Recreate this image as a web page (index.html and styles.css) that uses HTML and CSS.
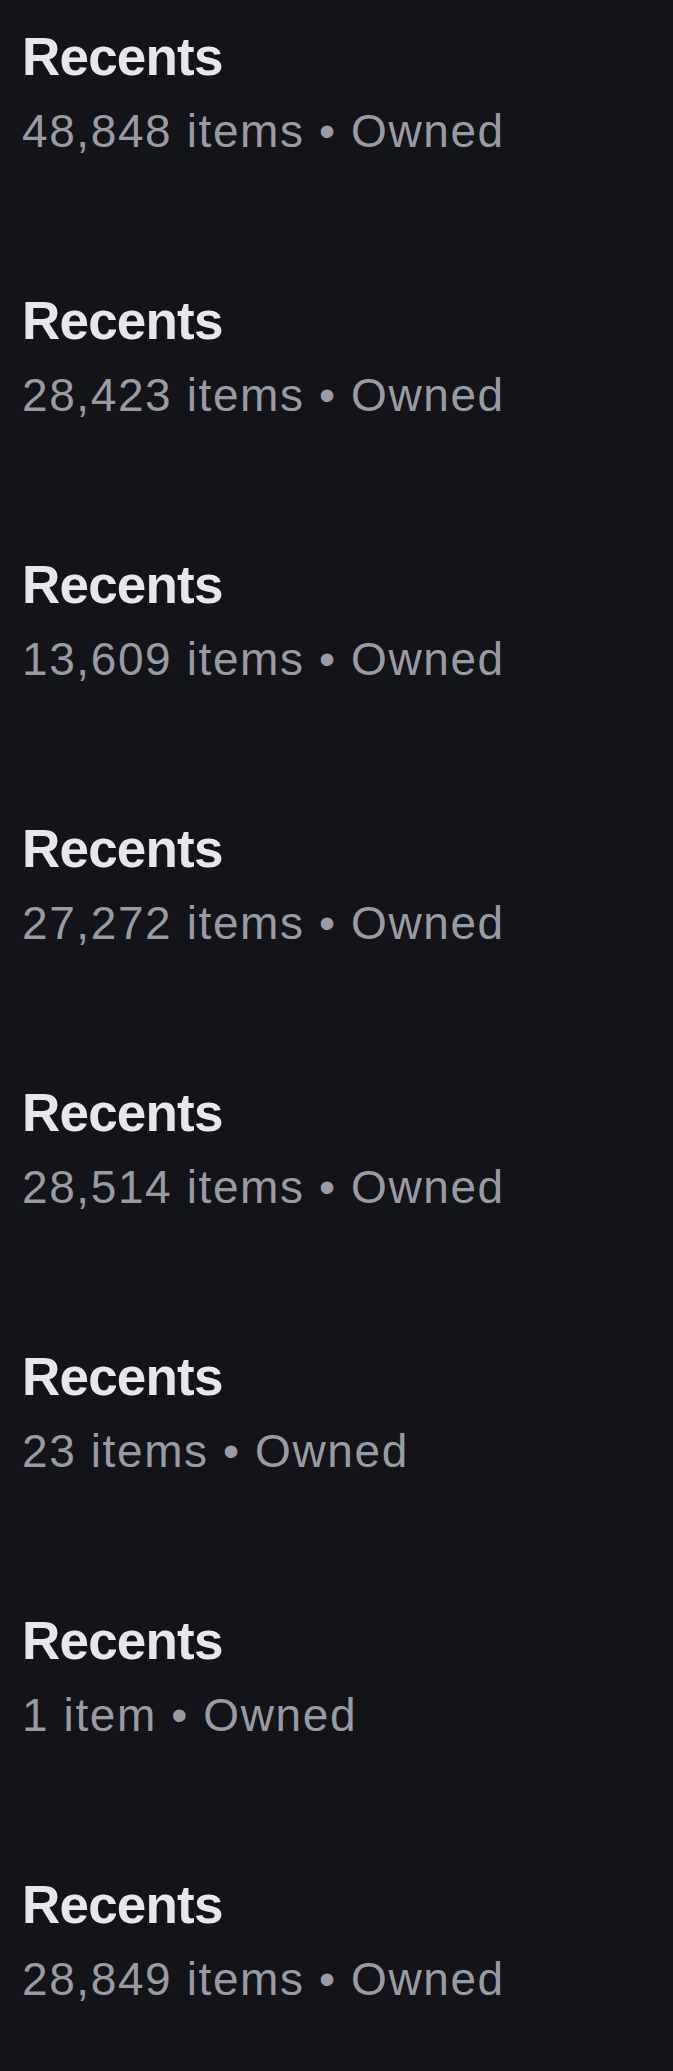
FILE: index.html
```html
<!DOCTYPE html>
<html lang="en">
<head>
<meta charset="utf-8">
<title>Recents</title>
<link rel="stylesheet" href="styles.css">
</head>
<body>
<main class="list">
  <section class="item"><h2 class="item-title">Recents</h2><p class="item-meta">48,848 items • Owned</p></section>
  <section class="item"><h2 class="item-title">Recents</h2><p class="item-meta">28,423 items • Owned</p></section>
  <section class="item"><h2 class="item-title">Recents</h2><p class="item-meta">13,609 items • Owned</p></section>
  <section class="item"><h2 class="item-title">Recents</h2><p class="item-meta">27,272 items • Owned</p></section>
  <section class="item"><h2 class="item-title">Recents</h2><p class="item-meta">28,514 items • Owned</p></section>
  <section class="item"><h2 class="item-title">Recents</h2><p class="item-meta">23 items • Owned</p></section>
  <section class="item"><h2 class="item-title">Recents</h2><p class="item-meta">1 item • Owned</p></section>
  <section class="item"><h2 class="item-title">Recents</h2><p class="item-meta">28,849 items • Owned</p></section>
</main>
</body>
</html>
```
FILE: styles.css
```css
html, body {
  margin: 0;
  padding: 0;
  background: #131419;
}
body {
  font-family: "Liberation Sans", Arial, sans-serif;
}
.list {
  display: flex;
  flex-direction: column;
  gap: 130px;
  padding: 25px 22px 40px;
}
.item {
  display: flex;
  flex-direction: column;
  gap: 14px;
}
.item-title {
  margin: 0;
  font-size: 53px;
  line-height: 64px;
  font-weight: 700;
  letter-spacing: -0.8px;
  color: #e6e6ec;
}
.item-meta {
  margin: 0;
  font-size: 46px;
  line-height: 56px;
  font-weight: 400;
  letter-spacing: 1.6px;
  color: #9a9ba2;
}
```
